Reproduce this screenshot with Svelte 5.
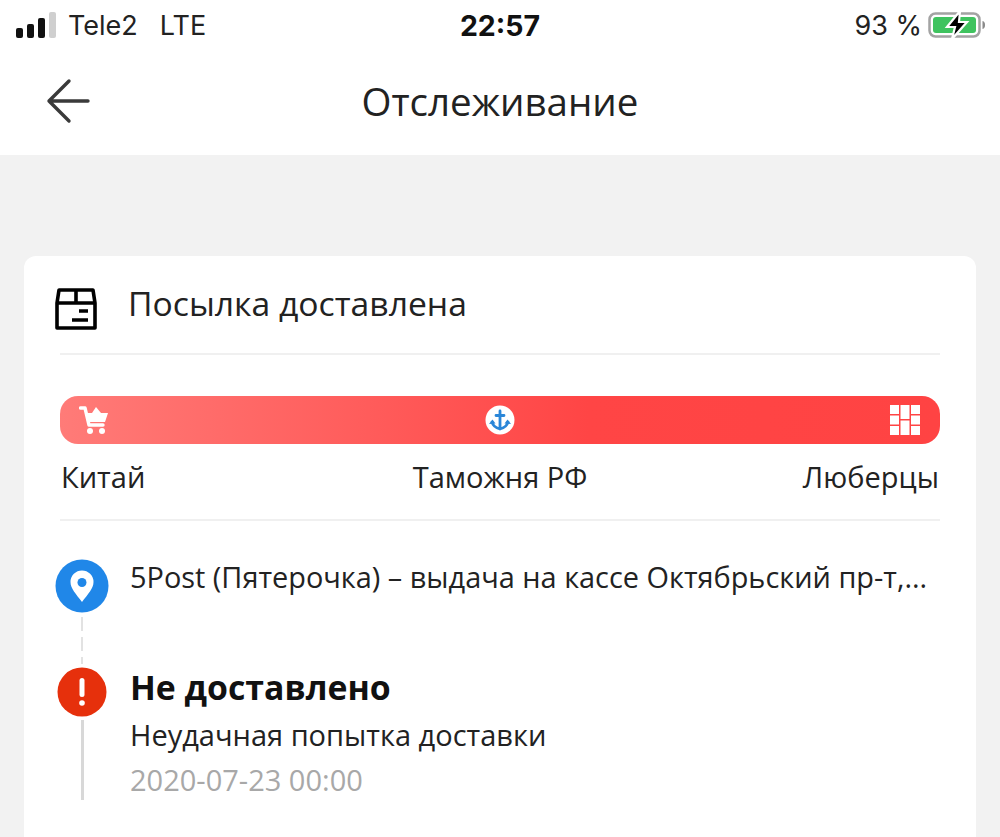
<script lang="ts">
  const stops = ['Китай', 'Таможня РФ', 'Люберцы'];
</script>

<div class="page">
  <div class="status">
    <div class="status-left">
      <span class="signal"><i class="b1"></i><i class="b2"></i><i class="b3"></i><i class="b4"></i></span>
      <span class="carrier">Tele2</span>
      <span class="net">LTE</span>
    </div>
    <div class="clock">22:57</div>
    <div class="status-right">
      <span class="pct">93 %</span>
      <svg class="battery" width="60" height="30" viewBox="0 0 60 30">
        <rect x="1.500" y="3.500" width="50" height="23" rx="6" fill="none" stroke="#a3a3a3" stroke-width="2.500" />
        <rect x="5" y="7" width="43" height="16" rx="3" fill="#3fc35f" />
        <path d="M54.500 11c2 .5 2.500 2 2.500 4s-.5 3.500-2.500 4z" fill="#8a8a8a" />
        <path d="M32 1 19 17h8l-3 12 15-17h-8z" fill="#000" stroke="#fff" stroke-width="2.200" />
      </svg>
    </div>
  </div>

  <header class="nav">
    <svg class="back" width="46" height="46" viewBox="0 0 46 46">
      <path d="M25 3 5 23l20 20M5 23h39" fill="none" stroke="#3a3a3a" stroke-width="3.400" stroke-linecap="round" stroke-linejoin="round" />
    </svg>
    <h1>Отслеживание</h1>
  </header>

  <main class="content">
    <section class="card">
      <div class="card-head">
        <svg width="44" height="44" viewBox="0 0 44 44">
          <path d="M5 3h34l2 13v25H3V16zM3 16h38M22 3v13M34 24H25M34 33H18" fill="none" stroke="#000" stroke-width="3.600" stroke-linejoin="round" />
        </svg>
        <h2>Посылка доставлена</h2>
      </div>

      <div class="route">
        <div class="bar">
          <svg width="30" height="30" viewBox="0 0 30 30">
            <path d="M1.500 3h4.500l4 17h14" fill="none" stroke="#fff" stroke-width="3.400" stroke-linecap="round" stroke-linejoin="round" />
            <path d="M7 8h22l-3 9H9z" fill="#fff" />
            <path d="M13 8l4-6 5 6z" fill="#fff" />
            <circle cx="11" cy="26" r="3" fill="#fff" />
            <circle cx="23" cy="26" r="3" fill="#fff" />
          </svg>
          <svg width="30" height="30" viewBox="0 0 30 30">
            <circle cx="15" cy="15" r="14.500" fill="#fff" />
            <path d="M15 6v18M11 10.500h8M7 17c1 4 4 6 8 7 4-1 7-3 8-7" fill="none" stroke="#2a86d8" stroke-width="2.800" stroke-linecap="round" />
            <path d="M4 19l3.500-4.500 3 4zM26 19l-3.500-4.500-3 4z" fill="#2a86d8" />
          </svg>
          <svg width="30" height="30" viewBox="0 0 30 30" fill="#fff">
            <rect x="0" y="0" width="9" height="9" />
            <rect x="0" y="10.500" width="9" height="9" />
            <rect x="0" y="21" width="9" height="9" />
            <rect x="10.500" y="0" width="9" height="14" />
            <rect x="10.500" y="15.500" width="9" height="14.500" />
            <rect x="21" y="0" width="9" height="9" />
            <rect x="21" y="10.500" width="9" height="9" />
            <rect x="21" y="21" width="9" height="9" />
          </svg>
        </div>
        <div class="stops">
          {#each stops as stop}
            <span>{stop}</span>
          {/each}
        </div>
      </div>

      <div class="timeline">
        <div class="row address">
          <div class="rail">
            <svg width="54" height="54" viewBox="0 0 54 54">
              <circle cx="27" cy="27" r="26.500" fill="#2087e8" />
              <path d="M27 43C21 35 15.500 29.500 15.500 23a11.500 11.500 0 0 1 23 0C38.500 29.500 33 35 27 43z" fill="#fff" />
              <circle cx="27" cy="23.500" r="4.500" fill="#2087e8" />
            </svg>
            <span class="dash"></span>
          </div>
          <p class="addr-text">5Post (Пятерочка) – выдача на кассе Октябрьский пр-т,...</p>
        </div>

        <div class="row">
          <div class="rail">
            <svg width="50" height="50" viewBox="0 0 50 50">
              <circle cx="25" cy="25" r="24.500" fill="#e6300c" />
              <rect x="22.500" y="11" width="5" height="19" rx="2.500" fill="#fff" />
              <circle cx="25" cy="36" r="2.800" fill="#fff" />
            </svg>
            <span class="line"></span>
          </div>
          <div class="event">
            <h3>Не доставлено</h3>
            <p>Неудачная попытка доставки</p>
            <time>2020-07-23 00:00</time>
          </div>
        </div>
      </div>
    </section>
  </main>
</div>

<style>
  :global(body) {
    margin: 0;
  }

  .page {
    width: 1000px;
    height: 837px;
    overflow: hidden;
    background: #f2f2f2;
    font-family: "Open Sans", "Noto Sans", sans-serif;
    color: #111;
  }

  .status {
    height: 50px;
    background: #fff;
    display: grid;
    grid-template-columns: 1fr auto 1fr;
    align-items: center;
    padding: 0 12px;
    font-family: Inter, Roboto, sans-serif;
  }

  .status-left {
    display: flex;
    align-items: center;
    font-size: 27px;
    color: #222;
  }

  .signal {
    display: flex;
    align-items: flex-end;
    gap: 4px;
    height: 26px;
    margin: 0 12px 0 4px;
  }

  .signal i {
    width: 7px;
    border-radius: 2px;
    background: #111;
  }

  .b1 { height: 10px; }
  .b2 { height: 14px; }
  .b3 { height: 20px; }
  .signal .b4 {
    height: 26px;
    background: #cfcfcf;
  }

  .net {
    margin-left: 22px;
  }

  .clock {
    font-size: 28.500px;
    font-weight: 700;
    color: #111;
  }

  .status-right {
    display: flex;
    justify-content: flex-end;
    align-items: center;
    gap: 6px;
    font-size: 27px;
    color: #222;
  }

  .nav {
    height: 105px;
    padding-bottom: 4px;
    box-sizing: border-box;
    background: #fff;
    display: flex;
    align-items: center;
    justify-content: center;
    position: relative;
  }

  .back {
    position: absolute;
    left: 44px;
    top: 28px;
  }

  h1 {
    margin: 0;
    font-size: 38.500px;
    font-weight: 400;
    color: #222;
  }

  .content {
    padding: 101px 24px 0;
  }

  .card {
    background: #fff;
    border-radius: 12px;
    padding: 0 36px;
    height: 600px;
  }

  .card-head {
    height: 99px;
    padding-bottom: 3px;
    display: flex;
    align-items: center;
    gap: 30px;
    border-bottom: 2px solid #f0f0f0;
    box-sizing: border-box;
  }

  .card-head svg {
    margin-left: -6px;
    margin-top: 11px;
  }

  h2 {
    margin: 0;
    font-size: 33.700px;
    font-weight: 400;
    color: #222;
  }

  .route {
    padding-top: 41px;
    height: 166px;
    box-sizing: border-box;
    border-bottom: 2px solid #f0f0f0;
  }

  .bar {
    height: 48px;
    border-radius: 18px;
    background: linear-gradient(90deg, #ff7b78 0%, #ff5c5b 35%, #ff4545 60%, #ff4343 100%);
    display: flex;
    justify-content: space-between;
    align-items: center;
    padding: 0 20px 0 19px;
  }

  .stops {
    display: grid;
    grid-template-columns: 1fr auto 1fr;
    padding: 13px 1px 0;
    font-size: 29px;
    color: #222;
  }

  .stops span:last-child {
    text-align: right;
  }

  .timeline {
    padding-top: 38px;
  }

  .row {
    display: flex;
    gap: 26px;
  }

  .rail {
    width: 44px;
    flex: none;
    display: flex;
    flex-direction: column;
    align-items: center;
  }

  .rail svg {
    flex: none;
  }

  .address {
    height: 108px;
  }

  .dash {
    width: 2px;
    height: 47px;
    margin-top: 4px;
    background: repeating-linear-gradient(#e2e2e2 0 14px, transparent 14px 20px);
  }

  .line {
    width: 3px;
    height: 80px;
    margin-top: 3px;
    background: #d8d8d8;
  }

  .addr-text {
    margin: 0;
    font-size: 28.900px;
    line-height: 36px;
    color: #222;
    white-space: nowrap;
  }

  h3 {
    margin: 0;
    font-size: 33.800px;
    line-height: 40px;
    font-weight: 700;
    color: #111;
  }

  .event p {
    margin: 10px 0 0;
    font-size: 29px;
    line-height: 36px;
    color: #222;
  }

  time {
    display: block;
    margin-top: 9px;
    font-size: 29px;
    line-height: 36px;
    color: #a8a8a8;
  }
</style>
